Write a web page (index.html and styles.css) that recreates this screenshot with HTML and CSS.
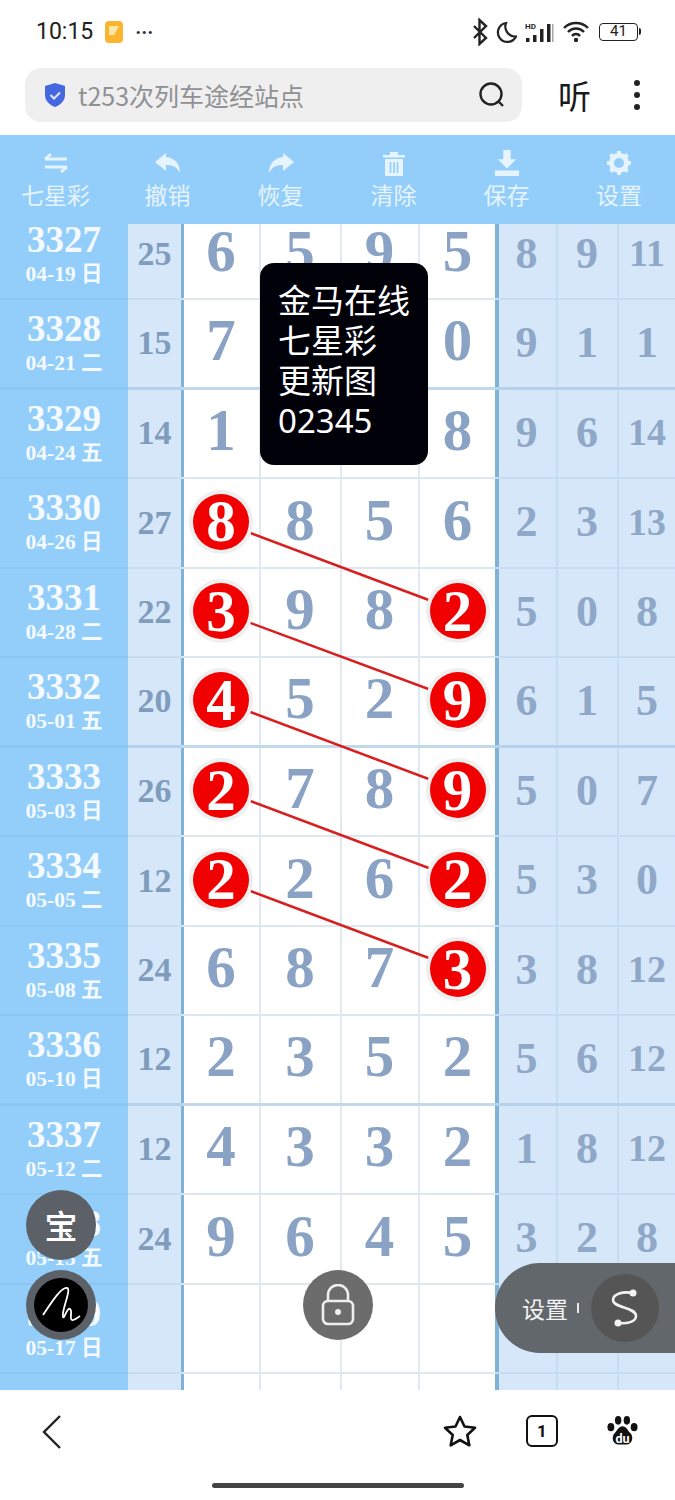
FILE: index.html
```html
<!DOCTYPE html>
<html lang="zh">
<head>
<meta charset="utf-8">
<title>七星彩</title>
<link rel="stylesheet" href="styles.css">
</head>
<body>
<div class="page">
  <header class="status">
    <div class="status-left">
      <span class="time">10:15</span>
      <svg class="app-icon" viewBox="0 0 20 24"><rect x="1" y="1" width="18" height="22" rx="4" fill="#fbb62f"/><path d="M5 6h10l-5 9H5z" fill="#fde6a8"/></svg>
      <span class="more-dots">···</span>
    </div>
    <div class="status-right">
      <svg class="si" width="16" height="28" viewBox="0 0 16 28"><path d="M2 8l12 12-6.500 6V2L14 8 2 20" fill="none" stroke="#222" stroke-width="2.400"/></svg>
      <svg class="si" width="21" height="24" viewBox="0 0 21 24"><path d="M10 3a9.500 9.500 0 1 0 10 13.500A10 10 0 0 1 10 3z" fill="none" stroke="#222" stroke-width="2.200"/></svg>
      <svg class="si" width="30" height="24" viewBox="0 0 30 24"><g fill="#222"><rect x="1" y="18" width="3.500" height="4"/><rect x="8" y="15" width="3.500" height="7"/><rect x="15" y="9" width="3.500" height="13"/><rect x="22" y="4" width="3.500" height="18"/><rect x="27" y="4" width="1.500" height="18" opacity=".4"/></g><text x="0" y="9" class="hd">HD</text></svg>
      <svg class="si" width="26" height="24" viewBox="0 0 26 24"><path d="M1 8a17 17 0 0 1 24 0M5 12a11 11 0 0 1 16 0M9 16a5 5 0 0 1 8 0" fill="none" stroke="#222" stroke-width="2.400"/><circle cx="13" cy="20" r="2.200" fill="#222"/></svg>
      <div class="battery"><span class="battery-num">41</span></div>
    </div>
  </header>

  <div class="addr">
    <div class="search">
      <svg class="shield" width="24" height="26" viewBox="0 0 24 26"><path d="M12 1l10 3v9c0 6-5 10-10 12C7 23 2 19 2 13V4z" fill="#4568e0"/><path d="M7.500 13l3.500 3.500 6-6" fill="none" stroke="#dfe6fb" stroke-width="2"/></svg>
      <span class="query">t253次列车途经站点</span>
      <svg class="mag" width="28" height="28" viewBox="0 0 28 28"><circle cx="13" cy="13" r="10.500" fill="none" stroke="#222" stroke-width="2.400"/><path d="M20 20l5 5" stroke="#222" stroke-width="2.400"/></svg>
    </div>
    <span class="listen">听</span>
    <div class="kebab"><i></i><i></i><i></i></div>
  </div>

  <nav class="toolbar">
    <div class="tool">
      <svg width="26" height="26" viewBox="0 0 26 26"><path d="M2 9h22M2 9l6-5M24 17H2M24 17l-6 5" fill="none" stroke="#e6f4ff" stroke-width="2.800"/></svg>
      <span>七星彩</span>
    </div>
    <div class="tool">
      <svg width="30" height="26" viewBox="0 0 30 26"><path d="M13 3L2 12l11 9v-6c7 0 11 2 14 8 0-9-5-15-14-16z" fill="#e6f4ff"/></svg>
      <span>撤销</span>
    </div>
    <div class="tool">
      <svg width="30" height="26" viewBox="0 0 30 26"><path d="M17 3l11 9-11 9v-6c-7 0-11 2-14 8 0-9 5-15 14-16z" fill="#e6f4ff"/></svg>
      <span>恢复</span>
    </div>
    <div class="tool">
      <svg width="26" height="26" viewBox="0 0 26 26"><path d="M2 5h22v2.500H2zM9 5V2h8v3zM4 9h18v17H4z" fill="#e6f4ff"/><path d="M9.500 12v11M13 12v11M16.500 12v11" stroke="#93cefb" stroke-width="1.600"/></svg>
      <span>清除</span>
    </div>
    <div class="tool">
      <svg width="30" height="28" viewBox="0 0 30 28"><path d="M11 0h8v10h6L15 20 5 10h6zM2 22h26v6H2z" fill="#e6f4ff"/></svg>
      <span>保存</span>
    </div>
    <div class="tool">
      <svg width="26" height="26" viewBox="0 0 26 26"><circle cx="13" cy="13" r="7.500" fill="none" stroke="#e6f4ff" stroke-width="5"/><path d="M13 1v5M13 20v5M1 13h5M20 13h5M4.500 4.500l4 4M17.500 17.500l4 4M21.500 4.500l-4 4M8.500 17.500l-4 4" stroke="#e6f4ff" stroke-width="4"/></svg>
      <span>设置</span>
    </div>
  </nav>

  <main class="board">
    <div class="rows">
      <div class="row"><div class="c head"><b>3327</b><small>04-19 日</small></div><div class="c sum">25</div><div class="c n first">6</div><div class="c n">5</div><div class="c n">9</div><div class="c n">5</div><div class="c r first">8</div><div class="c r">9</div><div class="c r two">11</div></div>
      <div class="row"><div class="c head"><b>3328</b><small>04-21 二</small></div><div class="c sum">15</div><div class="c n first">7</div><div class="c n">3</div><div class="c n">1</div><div class="c n">0</div><div class="c r first">9</div><div class="c r">1</div><div class="c r">1</div></div>
      <div class="row"><div class="c head"><b>3329</b><small>04-24 五</small></div><div class="c sum">14</div><div class="c n first">1</div><div class="c n">4</div><div class="c n">1</div><div class="c n">8</div><div class="c r first">9</div><div class="c r">6</div><div class="c r two">14</div></div>
      <div class="row"><div class="c head"><b>3330</b><small>04-26 日</small></div><div class="c sum">27</div><div class="c n first"><span class="ball">8</span></div><div class="c n">8</div><div class="c n">5</div><div class="c n">6</div><div class="c r first">2</div><div class="c r">3</div><div class="c r two">13</div></div>
      <div class="row"><div class="c head"><b>3331</b><small>04-28 二</small></div><div class="c sum">22</div><div class="c n first"><span class="ball">3</span></div><div class="c n">9</div><div class="c n">8</div><div class="c n"><span class="ball">2</span></div><div class="c r first">5</div><div class="c r">0</div><div class="c r">8</div></div>
      <div class="row"><div class="c head"><b>3332</b><small>05-01 五</small></div><div class="c sum">20</div><div class="c n first"><span class="ball">4</span></div><div class="c n">5</div><div class="c n">2</div><div class="c n"><span class="ball">9</span></div><div class="c r first">6</div><div class="c r">1</div><div class="c r">5</div></div>
      <div class="row"><div class="c head"><b>3333</b><small>05-03 日</small></div><div class="c sum">26</div><div class="c n first"><span class="ball">2</span></div><div class="c n">7</div><div class="c n">8</div><div class="c n"><span class="ball">9</span></div><div class="c r first">5</div><div class="c r">0</div><div class="c r">7</div></div>
      <div class="row"><div class="c head"><b>3334</b><small>05-05 二</small></div><div class="c sum">12</div><div class="c n first"><span class="ball">2</span></div><div class="c n">2</div><div class="c n">6</div><div class="c n"><span class="ball">2</span></div><div class="c r first">5</div><div class="c r">3</div><div class="c r">0</div></div>
      <div class="row"><div class="c head"><b>3335</b><small>05-08 五</small></div><div class="c sum">24</div><div class="c n first">6</div><div class="c n">8</div><div class="c n">7</div><div class="c n"><span class="ball">3</span></div><div class="c r first">3</div><div class="c r">8</div><div class="c r two">12</div></div>
      <div class="row"><div class="c head"><b>3336</b><small>05-10 日</small></div><div class="c sum">12</div><div class="c n first">2</div><div class="c n">3</div><div class="c n">5</div><div class="c n">2</div><div class="c r first">5</div><div class="c r">6</div><div class="c r two">12</div></div>
      <div class="row"><div class="c head"><b>3337</b><small>05-12 二</small></div><div class="c sum">12</div><div class="c n first">4</div><div class="c n">3</div><div class="c n">3</div><div class="c n">2</div><div class="c r first">1</div><div class="c r">8</div><div class="c r two">12</div></div>
      <div class="row"><div class="c head"><b>3338</b><small>05-15 五</small></div><div class="c sum">24</div><div class="c n first">9</div><div class="c n">6</div><div class="c n">4</div><div class="c n">5</div><div class="c r first">3</div><div class="c r">2</div><div class="c r">8</div></div>
      <div class="row"><div class="c head"><b>3339</b><small>05-17 日</small></div><div class="c sum"></div><div class="c n first"></div><div class="c n"></div><div class="c n"></div><div class="c n"></div><div class="c r first"></div><div class="c r"></div><div class="c r"></div></div>
      <div class="row"><div class="c head"></div><div class="c sum"></div><div class="c n first"></div><div class="c n"></div><div class="c n"></div><div class="c n"></div><div class="c r first"></div><div class="c r"></div><div class="c r"></div></div>
    </div>
  </main>

  <svg class="links" width="675" height="1500" viewBox="0 0 675 1500">
    <g stroke="#d81e1e" stroke-width="2.500">
      <line x1="221" y1="522" x2="458" y2="611"/>
      <line x1="221" y1="612" x2="458" y2="700"/>
      <line x1="221" y1="701" x2="458" y2="790"/>
      <line x1="221" y1="790" x2="458" y2="879"/>
      <line x1="221" y1="880" x2="458" y2="969"/>
    </g>
  </svg>

  <div class="tip">金马在线<br>七星彩<br>更新图<br>02345</div>

  <div class="fab treasure">宝</div>
  <div class="fab sign">
    <div class="sign-in">
      <svg width="44" height="44" viewBox="0 0 44 44"><path d="M4 32C12 20 22 4 28 5c5 1-6 23-4 29 1 3 4-10 7-8 3 2-1 10 2 11 2 1 5-2 8-4" fill="none" stroke="#fff" stroke-width="1.800"/></svg>
    </div>
  </div>
  <div class="fab lock">
    <svg width="34" height="42" viewBox="0 0 34 42"><path d="M7 18v-7a10 10 0 0 1 20 0v7" fill="none" stroke="#efefef" stroke-width="2.600"/><rect x="2" y="17" width="30" height="23" rx="5" fill="none" stroke="#efefef" stroke-width="2.600"/><circle cx="17" cy="28" r="3" fill="#efefef"/></svg>
  </div>
  <div class="pill">
    <span class="pill-label">设置</span>
    <i class="pill-tick"></i>
    <div class="pill-s">
      <svg width="34" height="40" viewBox="0 0 34 40"><path d="M25 5C15 3 5 6 5 12c0 8 23 7 23 16 0 6-9 8-18 7" fill="none" stroke="#f2f2f2" stroke-width="2.600"/><circle cx="25" cy="5" r="3.500" fill="#f2f2f2"/><circle cx="10" cy="35" r="3.500" fill="#f2f2f2"/></svg>
    </div>
  </div>

  <footer class="bottom">
    <svg class="back" width="20" height="34" viewBox="0 0 20 34"><path d="M18 1L2 17l16 16" fill="none" stroke="#222" stroke-width="2.400"/></svg>
    <div class="bottom-right">
      <svg width="34" height="32" viewBox="0 0 34 32"><path d="M17 2l4.500 9.500 10.500 1.300-7.700 7.200 2 10.300L17 25l-9.300 5.300 2-10.300L2 12.800l10.500-1.300z" fill="none" stroke="#111" stroke-width="2.600" stroke-linejoin="round"/></svg>
      <div class="tabs">1</div>
      <svg width="31" height="32" viewBox="0 0 32 32"><g fill="#111"><ellipse cx="4" cy="12" rx="3.500" ry="4.200"/><ellipse cx="11.500" cy="5" rx="3.300" ry="4.500"/><ellipse cx="20.500" cy="5" rx="3.300" ry="4.500"/><ellipse cx="28" cy="12" rx="3.500" ry="4.200"/><path d="M16 11c4 0 5 4 8 7 4 4 2 12-4 12h-8c-6 0-8-8-4-12 3-3 4-7 8-7z"/></g><text x="16" y="28" class="du">du</text></svg>
    </div>
  </footer>
  <div class="homebar"></div>
</div>
</body>
</html>
```
FILE: styles.css
```css
* { box-sizing: border-box; }
html, body { margin: 0; padding: 0; }
body { background: #fff; font-family: "Noto Sans", "Noto Sans CJK SC", sans-serif; }

.page {
  position: relative;
  width: 675px;
  height: 1500px;
  overflow: hidden;
  display: flex;
  flex-direction: column;
  background: #fff;
}

/* status bar */
.status {
  height: 63px;
  flex: none;
  display: flex;
  align-items: center;
  justify-content: space-between;
  padding: 0 37px 0 36px;
}
.status-left { display: flex; align-items: center; gap: 11px; }
.time { font: 400 23px "Roboto", sans-serif; color: #222; }
.app-icon { width: 20px; height: 24px; }
.more-dots { font: 700 20px "Roboto", sans-serif; color: #333; letter-spacing: 0; }
.status-right { display: flex; align-items: center; gap: 8px; }
.si { display: block; }
.hd { font: 700 8px "Roboto", sans-serif; fill: #222; }
.battery {
  position: relative;
  width: 39px; height: 18px;
  border: 1.500px solid #222; border-radius: 4px;
  display: flex; align-items: center; justify-content: center;
  margin-left: 2px;
}
.battery::after {
  content: "";
  position: absolute;
  right: -4px; top: 4px;
  width: 2px; height: 7px;
  background: #222;
  border-radius: 0 2px 2px 0;
}
.battery-num { font: 400 15px "Roboto", sans-serif; color: #222; line-height: 1; }

/* address row */
.addr {
  height: 72px;
  flex: none;
  display: flex;
  align-items: flex-start;
  padding: 5px 0 0 25px;
  position: relative;
}
.search {
  width: 497px; height: 54px;
  background: #efefef;
  border-radius: 16px;
  display: flex;
  align-items: center;
  padding: 0 16px 0 18px;
}
.shield { flex: none; margin-right: 11px; }
.query {
  flex: 1;
  font: 400 25px "Noto Sans CJK SC", sans-serif;
  color: #8f9194;
  white-space: nowrap;
}
.mag { flex: none; }
.listen {
  margin-left: 36px;
  font: 400 33px/54px "Noto Sans CJK SC", sans-serif;
  color: #1a1a1a;
}
.kebab {
  margin-left: 43px;
  height: 54px;
  display: flex;
  flex-direction: column;
  justify-content: center;
  gap: 6px;
}
.kebab i { display: block; width: 6px; height: 6px; border-radius: 50%; background: #222; }

/* toolbar */
.toolbar {
  height: 89px;
  flex: none;
  background: #93cefb;
  display: grid;
  grid-template-columns: 111px 113px 113px 113px 113px 112px;
  position: relative;
  z-index: 3;
}
.tool {
  display: flex;
  flex-direction: column;
  align-items: center;
  padding-top: 15px;
  color: #e6f4ff;
  font: 400 23px/34px "Noto Sans CJK SC", sans-serif;
}
.tool svg { height: 26px; display: block; }
.tool span { margin-top: 1px; white-space: nowrap; }

/* board */
.board {
  height: 1166px;
  flex: none;
  overflow: hidden;
}
.rows {
  margin-top: -13.500px;
  display: grid;
  grid-auto-rows: 89.500px;
}
.row {
  display: grid;
  grid-template-columns: 128px 53px 80px 81px 78px 75px 63px 61px 56px;
}
.c {
  display: flex;
  align-items: center;
  justify-content: center;
  border-bottom: 2px solid #dfe7ee;
  font-family: "Liberation Serif", "Noto Sans CJK SC", serif;
  font-weight: 700;
}
.row:nth-child(4n+2) .c { border-bottom: 3px solid #c2d9ec; }

.head {
  flex-direction: column;
  background: #93cefb;
  color: #f4faff;
  justify-content: flex-start;
  padding-top: 8px;
  border-bottom-color: #8cc6f3 !important;
}
.head b { font-size: 37px; line-height: 41px; }
.head small { font-size: 21.500px; line-height: 28px; white-space: nowrap; }

.sum {
  background: #d5e7f9;
  color: #7f9cbd;
  font-size: 34px;
  border-bottom-color: #c6dcef;
}
.row:nth-child(4n+2) .sum { border-bottom-color: #b6d2ea; }

.n {
  background: #fff;
  color: #8aa3c4;
  font-size: 59px;
  line-height: 1;
  padding-bottom: 5px;
  box-shadow: inset -2px 0 0 #e0e9f0;
}
.n:nth-child(4), .n:nth-child(5) { padding-right: 3px; }
.n:nth-child(6) { box-shadow: none; }
.n.first { box-shadow: inset 3px 0 0 #7fb2d6, inset -2px 0 0 #e0e9f0; }

.r {
  background: #d5e7f9;
  color: #8fa8c8;
  font-size: 44px;
  padding-bottom: 2px;
  box-shadow: inset -2px 0 0 #c6dcef;
  border-bottom-color: #c6dcef;
}
.r:nth-child(8) { padding-right: 3px; }
.r:last-child { box-shadow: none; }
.r.first { box-shadow: inset 4px 0 0 #7fb2d6, inset -2px 0 0 #c6dcef; }
.r.two { font-size: 38px; }
.row:nth-child(4n+2) .r { border-bottom-color: #b6d2ea; }

.ball {
  position: relative;
  z-index: 2;
  width: 56px; height: 56px;
  margin-top: 3px;
  border-radius: 50%;
  background: #f00000;
  color: #fff;
  display: flex;
  align-items: center;
  justify-content: center;
  font-size: 59px;
  line-height: 1;
  box-shadow: 0 0 0 4px #efefef;
}

.links { position: absolute; left: 0; top: 0; z-index: 1; pointer-events: none; }

/* tooltip */
.tip {
  position: absolute;
  left: 260px; top: 263px;
  width: 168px; height: 202px;
  z-index: 4;
  background: #000008;
  border-radius: 14px;
  padding: 18px 0 0 18px;
  color: #fff;
  font: 400 33px/40px "Noto Sans", "Noto Sans CJK SC", sans-serif;
}

/* floating buttons */
.fab {
  position: absolute;
  z-index: 4;
  width: 70px; height: 70px;
  border-radius: 50%;
  display: flex;
  align-items: center;
  justify-content: center;
}
.treasure {
  left: 26px; top: 1190px;
  background: #5c6167;
  color: #fff;
  font: 500 33px "Noto Sans CJK SC", sans-serif;
}
.sign { left: 26px; top: 1270px; background: #5c6167; }
.sign-in {
  width: 54px; height: 54px;
  border-radius: 50%;
  background: #000;
  display: flex; align-items: center; justify-content: center;
}
.lock { left: 303px; top: 1270px; background: #6c6c6c; }
.pill {
  position: absolute;
  z-index: 4;
  left: 495px; top: 1263px;
  width: 180px; height: 90px;
  background: #62676b;
  border-radius: 45px 0 0 45px;
  display: flex;
  align-items: center;
  padding-left: 27px;
}
.pill-label { color: #f2f2f2; font: 400 23px "Noto Sans CJK SC", sans-serif; white-space: nowrap; }
.pill-tick { width: 2px; height: 10px; background: #e8e8e8; margin-left: 9px; }
.pill-s {
  width: 68px; height: 68px;
  border-radius: 50%;
  background: #555;
  margin-left: 12px;
  display: flex; align-items: center; justify-content: center;
}

/* bottom nav */
.bottom {
  flex: 1;
  background: #fff;
  position: relative;
  z-index: 3;
  display: flex;
  justify-content: space-between;
  align-items: flex-start;
  padding: 25px 37px 0 42px;
}
.bottom-right { display: flex; align-items: center; gap: 49px; }
.tabs {
  width: 32px; height: 32px;
  border: 2.600px solid #111;
  border-radius: 6px;
  display: flex; align-items: center; justify-content: center;
  font: 700 17px "Roboto", sans-serif;
  color: #111;
}
.du { font: 700 13px "Roboto", sans-serif; fill: #fff; text-anchor: middle; }
.homebar {
  position: absolute;
  z-index: 5;
  left: 212px; top: 1483px;
  width: 252px; height: 5px;
  border-radius: 3px;
  background: #444;
}
```
